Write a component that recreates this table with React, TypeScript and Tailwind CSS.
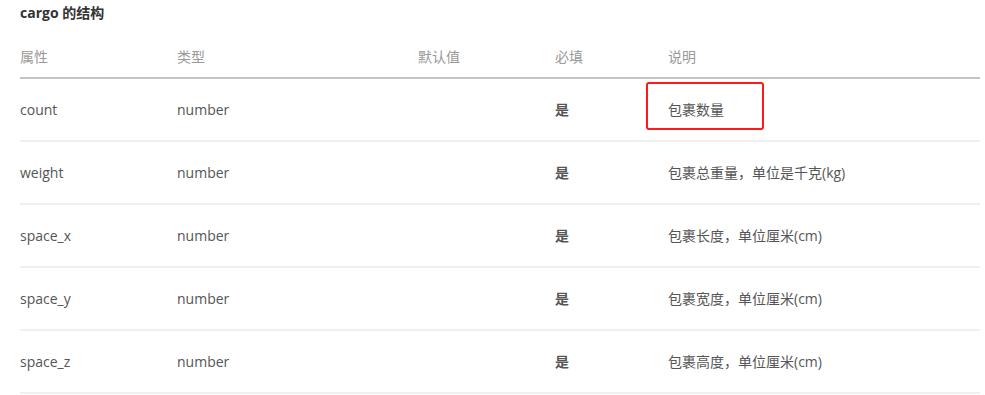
import React from 'react';

const rows = [
  { name: 'count', type: 'number', def: '', required: '是', desc: '包裹数量' },
  { name: 'weight', type: 'number', def: '', required: '是', desc: '包裹总重量，单位是千克(kg)' },
  { name: 'space_x', type: 'number', def: '', required: '是', desc: '包裹长度，单位厘米(cm)' },
  { name: 'space_y', type: 'number', def: '', required: '是', desc: '包裹宽度，单位厘米(cm)' },
  { name: 'space_z', type: 'number', def: '', required: '是', desc: '包裹高度，单位厘米(cm)' },
];

export default function App() {
  return (
    <div
      className="w-[985px] h-[395px] bg-white overflow-hidden px-5 text-[14px] text-[#555]"
      style={{ fontFamily: '"Open Sans", "Noto Sans CJK SC", sans-serif' }}
    >
      <h3 className="h-[25px] flex items-center font-bold text-[#333] text-[14px]">cargo 的结构</h3>
      <div className="relative w-[960px]">
        <table className="w-full border-collapse text-left">
          <thead>
            <tr className="border-b-2 border-[#c4c4c4]">
              <th className="w-[157px] h-[53px] pt-[10px] font-normal text-[#999]">属性</th>
              <th className="w-[241px] font-normal text-[#999] pt-[10px]">类型</th>
              <th className="w-[137px] font-normal text-[#999] pt-[10px]">默认值</th>
              <th className="w-[113px] font-normal text-[#999] pt-[10px]">必填</th>
              <th className="font-normal text-[#999] pt-[10px]">说明</th>
            </tr>
          </thead>
          <tbody>
            {rows.map((r) => (
              <tr key={r.name} className="border-b-2 border-[#f0f0f0] h-[63px]">
                <td>{r.name}</td>
                <td>{r.type}</td>
                <td>{r.def}</td>
                <td className="font-semibold text-[#555]">{r.required}</td>
                <td>{r.desc}</td>
              </tr>
            ))}
          </tbody>
        </table>
        {/* annotation box */}
        <div className="absolute left-[626px] top-[57px] w-[118px] h-[48px] border-2 border-[#ff1a1a] rounded-[3px]" />
      </div>
    </div>
  );
}
